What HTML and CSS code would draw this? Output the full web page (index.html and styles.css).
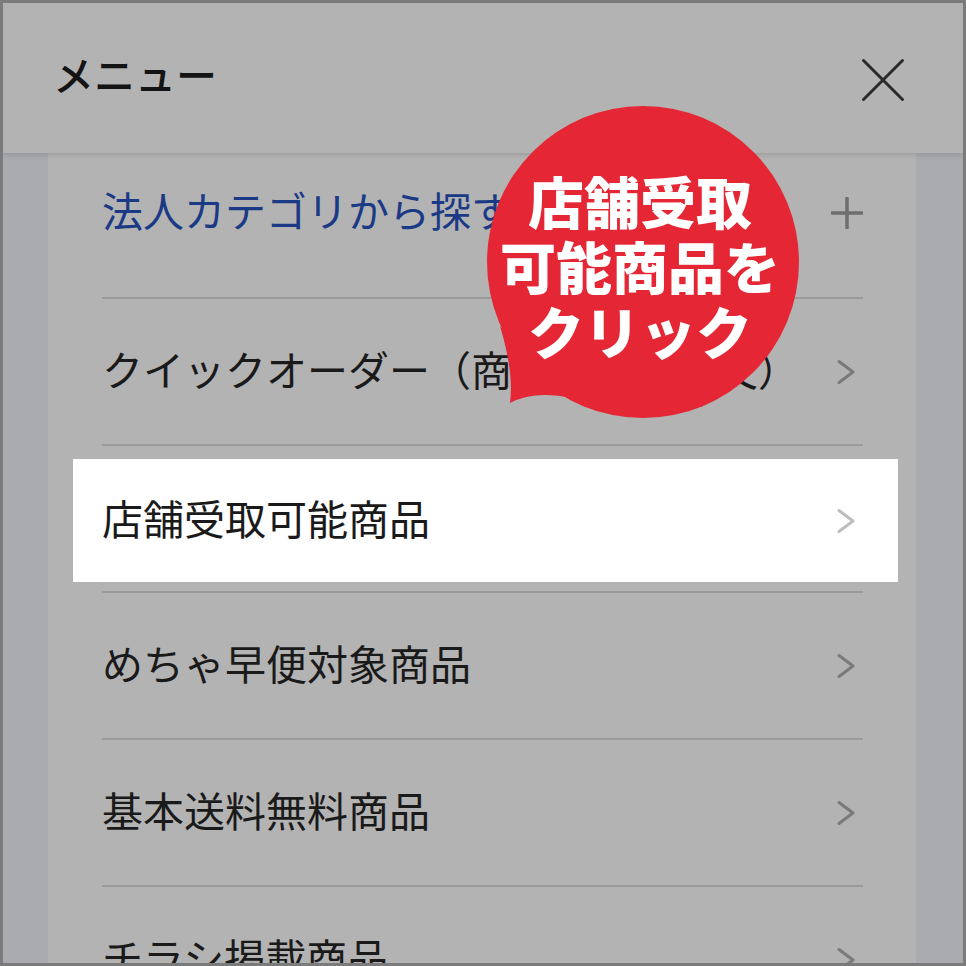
FILE: index.html
```html
<!DOCTYPE html>
<html lang="ja">
<head>
<meta charset="utf-8">
<title>メニュー</title>
<link rel="stylesheet" href="styles.css">
</head>
<body>
<div class="frame">
  <header class="header">
    <h1 class="title">メニュー</h1>
    <svg class="close" viewBox="0 0 46 46" aria-label="閉じる"><path d="M3.5 3.5 L42.5 42.5 M42.5 3.5 L3.5 42.5"/></svg>
  </header>
  <div class="body">
    <div class="strip"></div>
    <nav class="panel">
      <div class="row first">
        <span class="label blue">法人カテゴリから探す</span>
        <svg class="icon plus" viewBox="0 0 32 32"><path d="M16 1 V31 M1 16 H31"/></svg>
      </div>
      <div class="row">
        <span class="label">クイックオーダー（商品番号で注文）</span>
        <svg class="icon chev" viewBox="0 0 32 32"><path d="M8 5.5 L22 16 L8 26.5"/></svg>
      </div>
      <div class="row hl">
        <div class="hl-box">
          <span class="label">店舗受取可能商品</span>
          <svg class="icon chev light" viewBox="0 0 32 32"><path d="M8 5.5 L22 16 L8 26.5"/></svg>
        </div>
      </div>
      <div class="row">
        <span class="label">めちゃ早便対象商品</span>
        <svg class="icon chev" viewBox="0 0 32 32"><path d="M8 5.5 L22 16 L8 26.5"/></svg>
      </div>
      <div class="row">
        <span class="label">基本送料無料商品</span>
        <svg class="icon chev" viewBox="0 0 32 32"><path d="M8 5.5 L22 16 L8 26.5"/></svg>
      </div>
      <div class="row">
        <span class="label">チラシ掲載商品</span>
        <svg class="icon chev" viewBox="0 0 32 32"><path d="M8 5.5 L22 16 L8 26.5"/></svg>
      </div>
    </nav>
    <div class="strip"></div>
  </div>
  <div class="bubble">
    <svg class="bubble-shape" viewBox="470 95 350 340"><circle cx="643" cy="262" r="156"/><path d="M500 326 Q514 372 510 403 Q534 390 572 398 Z"/></svg>
    <div class="bubble-text">店舗受取<br>可能商品を<br>クリック</div>
  </div>
</div>
</body>
</html>
```
FILE: styles.css
```css
html, body {
  margin: 0;
  padding: 0;
}
body {
  font-family: "Noto Sans CJK JP", "Noto Sans", sans-serif;
  color: #1a1a1a;
}
.frame {
  position: relative;
  width: 966px;
  height: 966px;
  box-sizing: border-box;
  border: 3px solid #7b7b7b;
  background: #b3b3b3;
  overflow: hidden;
  display: flex;
  flex-direction: column;
}
.header {
  position: relative;
  z-index: 2;
  height: 150px;
  flex: none;
  display: flex;
  align-items: center;
  justify-content: space-between;
  padding: 0 57px 0 50px;
  background: #b3b3b3;
  box-shadow: 0 2px 5px rgba(0, 0, 0, 0.12);
}
.title {
  margin: 0;
  font-size: 41px;
  font-weight: 500;
  line-height: 1.2;
  color: #141414;
  position: relative;
  top: -4px;
}
.close {
  width: 46px;
  height: 46px;
  fill: none;
  stroke: #2b2b2b;
  stroke-width: 3;
  stroke-linecap: round;
  position: relative;
  top: 2px;
}
.body {
  flex: 1;
  display: flex;
  min-height: 0;
}
.strip {
  width: 45px;
  flex: none;
  background: #a9abae;
}
.strip:last-child {
  width: 47px;
}
.panel {
  flex: 1;
  background: #b3b3b3;
  padding: 0 53px 0 54px;
}
.row {
  height: 147px;
  box-sizing: border-box;
  border-bottom: 2px solid #9b9b9b;
  display: flex;
  align-items: center;
  justify-content: space-between;
}
.row.first {
  height: 146px;
  padding-bottom: 24px;
}
.label {
  font-size: 41px;
  line-height: 1.2;
  white-space: nowrap;
  color: #1a1a1a;
  position: relative;
  top: -3px;
}
.label.blue {
  color: #1b3a86;
}
.icon {
  width: 32px;
  height: 32px;
  flex: none;
  fill: none;
  stroke-linecap: round;
  stroke-linejoin: round;
}
.plus {
  stroke: #6e6e6e;
  stroke-width: 3.5;
}
.chev {
  stroke: #7a7a7a;
  stroke-width: 3;
}
.chev.light {
  stroke: #bdbdbd;
}
.row.hl {
  align-items: flex-start;
  padding-top: 13px;
}
.hl-box {
  flex: 1;
  height: 123px;
  margin: 0 -35px 0 -29px;
  padding: 0 35px 0 29px;
  background: #ffffff;
  display: flex;
  align-items: center;
  justify-content: space-between;
}
.bubble {
  position: absolute;
  left: 484px;
  top: 103px;
  width: 312px;
  height: 312px;
  z-index: 3;
  display: flex;
  align-items: center;
  justify-content: center;
}
.bubble-shape {
  position: absolute;
  left: -17px;
  top: -11px;
  width: 350px;
  height: 340px;
  fill: #e52634;
}
.bubble-text {
  position: relative;
  top: 2px;
  left: -3px;
  color: #ffffff;
  font-size: 56px;
  font-weight: 900;
  line-height: 65px;
  text-align: center;
  letter-spacing: 0;
}
```
